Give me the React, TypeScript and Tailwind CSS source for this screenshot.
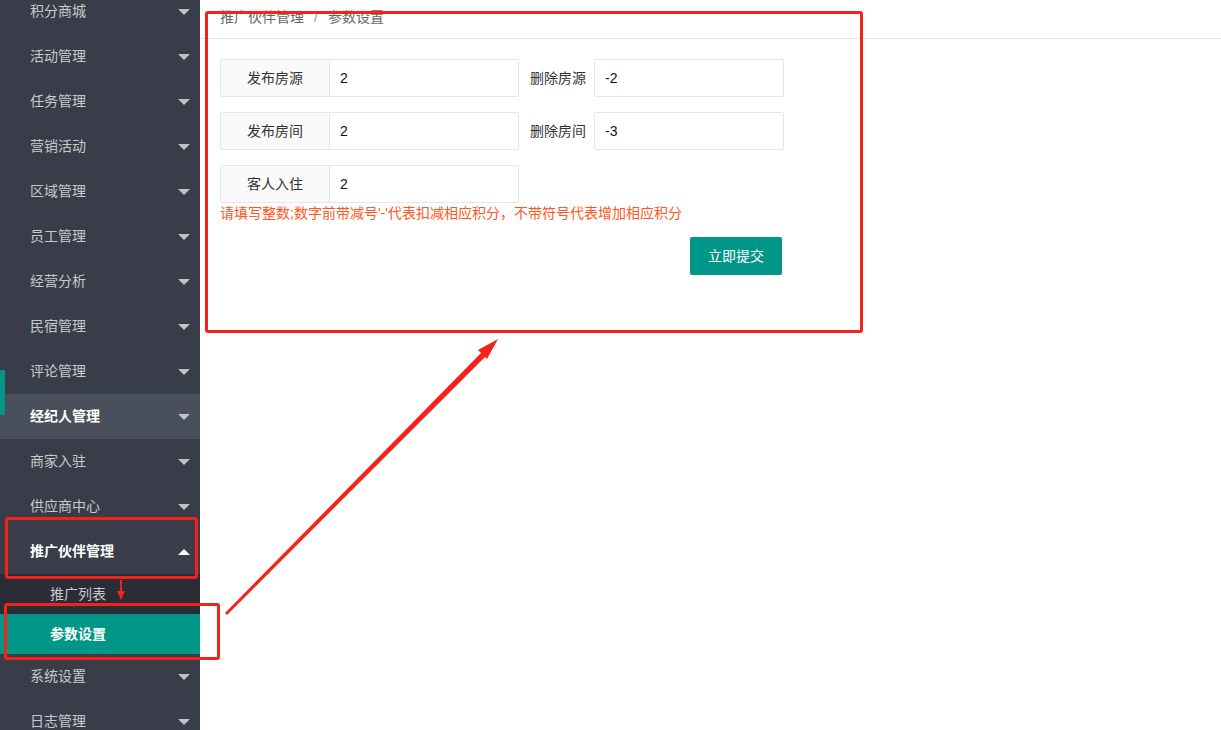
import React from 'react';

const font = { fontFamily: '"Liberation Sans", "Noto Sans CJK SC", sans-serif' };

const menu = [
    '积分商城', '活动管理', '任务管理', '营销活动', '区域管理', '员工管理',
    '经营分析', '民宿管理', '评论管理', '经纪人管理', '商家入驻', '供应商中心',
];

function Caret({ up = false }: { up?: boolean }) {
    return up ? (
        <span className="ml-auto mr-[10px] w-0 h-0 border-l-[6px] border-r-[6px] border-b-[6px] border-l-transparent border-r-transparent border-b-white" />
    ) : (
        <span className="ml-auto mr-[10px] w-0 h-0 border-l-[6px] border-r-[6px] border-t-[6px] border-l-transparent border-r-transparent border-t-[#c2c2c2]" />
    );
}

function NavItem({ label, active = false, open = false }: { label: string; active?: boolean; open?: boolean }) {
    return (
        <div className={`h-[45px] flex items-center pl-[30px] text-[14px] ${active ? 'bg-[#4a4f5c] text-white font-bold' : open ? 'text-white font-bold' : 'text-[#c8c9cc]'}`}>
            <span>{label}</span>
            <Caret up={open} />
        </div>
    );
}

function Field({ label, value }: { label: string; value: string }) {
    return (
        <div className="flex h-[38px]">
            <div className="w-[110px] flex items-center justify-center bg-[#fafafa] border border-[#e6e6e6] rounded-l-[2px] text-[14px] text-[#333]">{label}</div>
            <div className="w-[189px] flex items-center pl-[10px] border border-l-0 border-[#e6e6e6] rounded-r-[2px] text-[14px] text-[#111]">{value}</div>
        </div>
    );
}

function SideField({ label, value }: { label: string; value: string }) {
    return (
        <div className="flex h-[38px] ml-[10px]">
            <div className="w-[65px] flex items-center pl-[1px] text-[14px] text-[#333]">{label}</div>
            <div className="w-[190px] flex items-center pl-[10px] border border-[#e6e6e6] rounded-[2px] text-[14px] text-[#111]">{value}</div>
        </div>
    );
}

export default function App() {
    return (
        <div className="relative flex h-[730px] w-[1221px] overflow-hidden bg-white" style={font}>
            <aside className="w-[200px] shrink-0 bg-[#393d49] relative overflow-hidden">
                <div className="mt-[-11px]">
                    {menu.map((m) => (
                        <NavItem key={m} label={m} active={m === '经纪人管理'} />
                    ))}
                    <NavItem label="推广伙伴管理" open />
                    <div className="bg-[#2a2d35]">
                        <div className="h-[40px] flex items-center pl-[50px] text-[14px] text-[#c8c9cc]">推广列表</div>
                        <div className="h-[40px] flex items-center pl-[50px] text-[14px] text-white font-bold bg-[#009688]">参数设置</div>
                    </div>
                    <NavItem label="系统设置" />
                    <NavItem label="日志管理" />
                </div>
                <div className="absolute left-0 top-[370px] w-[5px] h-[45px] bg-[#009688]" />
            </aside>

            <main className="flex-1 flex flex-col">
                <div className="h-[39px] border-b border-[#e6e6e6] flex items-center pl-[20px] text-[14px] pb-[3px]">
                    <span className="text-[#666]">推广伙伴管理</span>
                    <span className="text-[#999] mx-[10px]">/</span>
                    <span className="text-[#666]">参数设置</span>
                </div>
                <div className="pl-[20px] pt-[20px]">
                    <div className="flex">
                        <Field label="发布房源" value="2" />
                        <SideField label="删除房源" value="-2" />
                    </div>
                    <div className="flex mt-[15px]">
                        <Field label="发布房间" value="2" />
                        <SideField label="删除房间" value="-3" />
                    </div>
                    <div className="flex mt-[15px]">
                        <Field label="客人入住" value="2" />
                    </div>
                    <div className="h-[20px] leading-[20px] text-[14px] text-[#ff5722]">
                        请填写整数;数字前带减号'-'代表扣减相应积分，不带符号代表增加相应积分
                    </div>
                    <div className="w-[562px] flex justify-end mt-[14px]">
                        <button className="h-[38px] px-[18px] bg-[#009688] text-white text-[14px] rounded-[2px]">立即提交</button>
                    </div>
                </div>
            </main>

            {/* annotations */}
            <div className="absolute left-[205px] top-[11px] w-[658px] h-[322px] border-[3px] border-[#f5221b] rounded-[3px] pointer-events-none" />
            <div className="absolute left-[5px] top-[517px] w-[193px] h-[62px] border-[3px] border-[#f5221b] rounded-[3px] pointer-events-none" />
            <div className="absolute left-[4px] top-[603px] w-[216px] h-[57px] border-[3px] border-[#f5221b] rounded-[3px] pointer-events-none" />
            <svg className="absolute left-0 top-0 pointer-events-none" width="1221" height="730">
                <polygon points="225,613 227,615 486,356 482,352" fill="#f5221b" />
                <polygon points="498,339 478,350 487,359" fill="#f5221b" />
                <line x1="121" y1="580" x2="121" y2="594" stroke="#f5221b" strokeWidth="2" />
                <polygon points="117,591 125,591 121,600" fill="#f5221b" />
            </svg>
        </div>
    );
}
